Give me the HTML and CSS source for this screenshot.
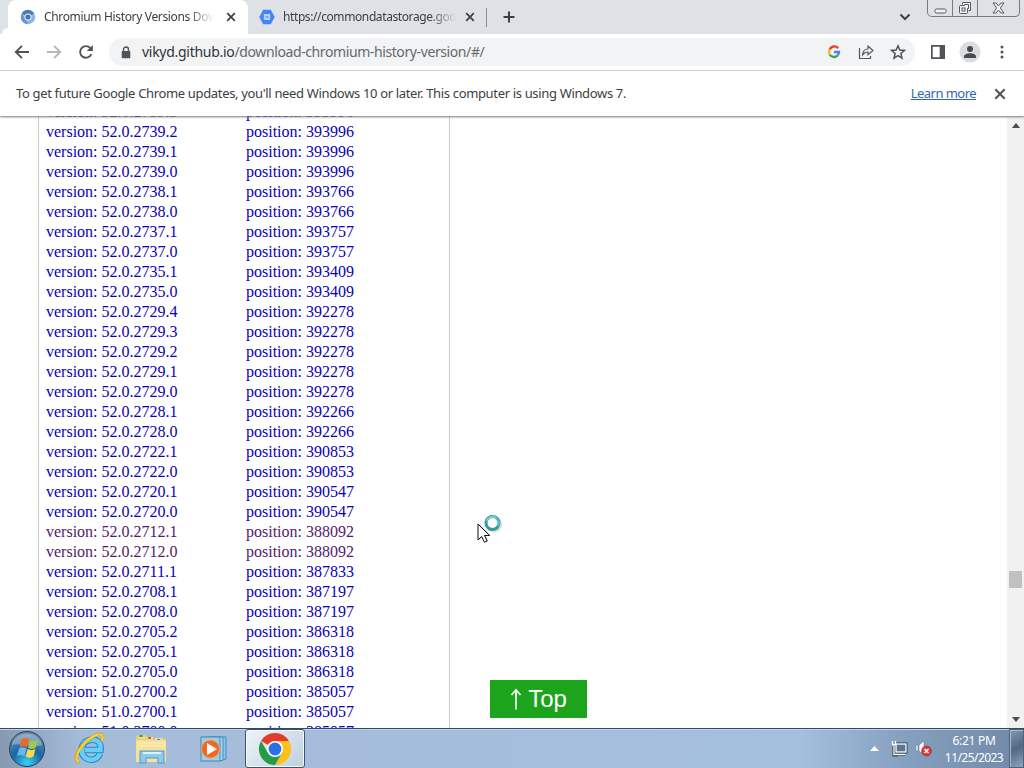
FILE: index.html
```html
<!DOCTYPE html>
<html lang="en">
<head>
<meta charset="utf-8">
<title>Chromium History Versions Download</title>
<link rel="stylesheet" href="styles.css">
</head>
<body>
<div class="desktop">
  <header class="tabstrip">
    <div class="tab active">
      <svg class="favicon" viewBox="0 0 16 16"><circle cx="8" cy="8" r="7.2" fill="#8bb4e4"/><path d="M8 8 1.8 4.4A7.2 7.2 0 0 1 14.2 4.5z" fill="#4a79b5"/><path d="M1.8 4.4 5 10l3 5.2A7.2 7.2 0 0 1 1.8 4.4" fill="#6496d2"/><circle cx="8" cy="8" r="3.6" fill="#e8f1fb"/><circle cx="8" cy="8" r="2.6" fill="#4675b0"/></svg>
      <span class="tab-title t1">Chromium History Versions Down</span>
      <svg class="close" viewBox="0 0 10 10"><path d="M1.2 1.2l7.6 7.6M8.8 1.2L1.2 8.8"/></svg>
    </div>
    <div class="tab">
      <svg class="favicon" viewBox="0 0 16 16"><path d="M4.2 .8h7.6L15.7 8l-3.9 7.2H4.2L.3 8z" fill="#4285f4"/><rect x="4.800" y="5" width="6.400" height="6" rx="1" fill="#b9d2fb"/><path d="M6.300 8h3.400" stroke="#4285f4"/></svg>
      <span class="tab-title t2">https://commondatastorage.goo</span>
      <svg class="close" viewBox="0 0 10 10"><path d="M1.2 1.2l7.6 7.6M8.8 1.2L1.2 8.8"/></svg>
    </div>
    <span class="tab-divider"></span>
    <svg class="plus" viewBox="0 0 12 12"><path d="M6 .5v11M.5 6h11"/></svg>
    <svg class="chevron" viewBox="0 0 12 8"><path d="M1.5 1.5 6 6l4.500-4.500"/></svg>
    <div class="window-controls">
      <span><svg width="13" height="6" viewBox="0 0 13 6"><rect x="1" y="1" width="11" height="4" rx="1.500"/></svg></span>
      <span><svg width="14" height="14" viewBox="0 0 14 14"><path d="M4.500 3.500v-2h8v8h-2"/><rect x="1.500" y="4.500" width="8" height="8" rx="1"/><rect x="4" y="7" width="3" height="3"/><path d="M6.500 4.500v-1h4v4h-1"/></svg></span>
      <span><svg width="13" height="12" viewBox="0 0 13 12"><path d="M1 1h3l2.500 3L9 1h3L8.300 6l3.700 5H9L6.500 8 4 11H1l3.700-5z"/></svg></span>
    </div>
  </header>

  <nav class="toolbar">
    <svg class="nav" viewBox="0 0 16 16"><path d="M15 8H2M8 1.800 1.800 8 8 14.200"/></svg>
    <svg class="nav forward" viewBox="0 0 16 16"><path d="M1 8h13M8 1.800 14.200 8 8 14.200"/></svg>
    <svg class="nav reload" viewBox="0 0 16 16"><path d="M13.300 10.200A5.800 5.800 0 1 1 12.400 4.200"/><path class="solid" d="M14.800 1v6H8.800z"/></svg>
    <div class="omnibox">
      <svg class="lock" viewBox="0 0 10 13"><path d="M2.500 6V3.500a2.500 2.500 0 0 1 5 0V6" fill="none" stroke="#505357" stroke-width="1.400"/><rect x=".7" y="5" width="8.600" height="7.300" rx="1" fill="#505357"/></svg>
      <span class="url"><b>vikyd.github.io</b>/download-chromium-history-version/#/</span>
      <svg class="google" viewBox="0 0 14 14"><g fill="none" stroke-width="2.300"><path d="M11.200 3.300A5 5 0 0 0 2.700 4.500" stroke="#ea4335"/><path d="M2.700 4.500a5 5 0 0 0 0 5" stroke="#fbbc05"/><path d="M2.700 9.500a5 5 0 0 0 7.700 1.200" stroke="#34a853"/><path d="M7 7h5a5 5 0 0 1-1.600 3.700" stroke="#4285f4"/></g></svg>
      <svg class="share" viewBox="0 0 16 16"><path d="M1.500 4v10.500h11V12"/><path d="M4.500 11C4.800 7 7 5 10 5V2l5 4.500-5 4.300V8C7.500 8 6 9 4.500 11z"/></svg>
      <svg class="star" viewBox="0 0 16 16"><path d="m8 1.800 1.800 4.200 4.700.4-3.600 3.100 1.100 4.600L8 11.700l-4 2.400 1.100-4.600-3.600-3.100 4.700-.4z"/></svg>
    </div>
    <svg class="panel" viewBox="0 0 14 14"><path fill="#505357" fill-rule="evenodd" d="M0 0h14v14H0zm1.700 1.700v10.600h7V1.700z"/></svg>
    <svg class="avatar" viewBox="0 0 22 22"><circle cx="11" cy="11" r="10.500" fill="#dadce0"/><circle cx="11" cy="8" r="3" fill="#464a4f"/><path d="M5 17v-1.500C5 13 8.500 12.200 11 12.200s6 .8 6 3.300V17z" fill="#464a4f"/></svg>
    <svg class="menu" viewBox="0 0 4 14"><circle cx="2" cy="2" r="1.500"/><circle cx="2" cy="7" r="1.500"/><circle cx="2" cy="12" r="1.500"/></svg>
  </nav>

  <div class="infobar">
    <span class="notice">To get future Google Chrome updates, you'll need Windows 10 or later. This computer is using Windows 7.</span>
    <a class="learn">Learn more</a>
    <svg class="dismiss" viewBox="0 0 12 12"><path d="M1.300 1.300l9.400 9.400M10.700 1.300 1.300 10.700"/></svg>
  </div>

  <main class="viewport">
    <div class="versions">
      <a class="row"><span>version: 52.0.2739.3</span><span>position: 393996</span></a>
      <a class="row"><span>version: 52.0.2739.2</span><span>position: 393996</span></a>
      <a class="row"><span>version: 52.0.2739.1</span><span>position: 393996</span></a>
      <a class="row"><span>version: 52.0.2739.0</span><span>position: 393996</span></a>
      <a class="row"><span>version: 52.0.2738.1</span><span>position: 393766</span></a>
      <a class="row"><span>version: 52.0.2738.0</span><span>position: 393766</span></a>
      <a class="row"><span>version: 52.0.2737.1</span><span>position: 393757</span></a>
      <a class="row"><span>version: 52.0.2737.0</span><span>position: 393757</span></a>
      <a class="row"><span>version: 52.0.2735.1</span><span>position: 393409</span></a>
      <a class="row"><span>version: 52.0.2735.0</span><span>position: 393409</span></a>
      <a class="row"><span>version: 52.0.2729.4</span><span>position: 392278</span></a>
      <a class="row"><span>version: 52.0.2729.3</span><span>position: 392278</span></a>
      <a class="row"><span>version: 52.0.2729.2</span><span>position: 392278</span></a>
      <a class="row"><span>version: 52.0.2729.1</span><span>position: 392278</span></a>
      <a class="row"><span>version: 52.0.2729.0</span><span>position: 392278</span></a>
      <a class="row"><span>version: 52.0.2728.1</span><span>position: 392266</span></a>
      <a class="row"><span>version: 52.0.2728.0</span><span>position: 392266</span></a>
      <a class="row"><span>version: 52.0.2722.1</span><span>position: 390853</span></a>
      <a class="row"><span>version: 52.0.2722.0</span><span>position: 390853</span></a>
      <a class="row"><span>version: 52.0.2720.1</span><span>position: 390547</span></a>
      <a class="row"><span>version: 52.0.2720.0</span><span>position: 390547</span></a>
      <a class="row visited"><span>version: 52.0.2712.1</span><span>position: 388092</span></a>
      <a class="row visited"><span>version: 52.0.2712.0</span><span>position: 388092</span></a>
      <a class="row"><span>version: 52.0.2711.1</span><span>position: 387833</span></a>
      <a class="row"><span>version: 52.0.2708.1</span><span>position: 387197</span></a>
      <a class="row"><span>version: 52.0.2708.0</span><span>position: 387197</span></a>
      <a class="row"><span>version: 52.0.2705.2</span><span>position: 386318</span></a>
      <a class="row"><span>version: 52.0.2705.1</span><span>position: 386318</span></a>
      <a class="row"><span>version: 52.0.2705.0</span><span>position: 386318</span></a>
      <a class="row"><span>version: 51.0.2700.2</span><span>position: 385057</span></a>
      <a class="row"><span>version: 51.0.2700.1</span><span>position: 385057</span></a>
      <a class="row"><span>version: 51.0.2700.0</span><span>position: 385057</span></a>
    </div>
    <button class="top"><svg width="12" height="22" viewBox="0 0 12 22"><path d="M6 21.500V2M1.500 7 6 1.800 10.500 7" fill="none" stroke="#fff" stroke-width="1.700"/></svg>Top</button>
    <div class="scrollbar">
      <svg width="8" height="5" viewBox="0 0 8 5"><path d="M0 5 4 0l4 5z"/></svg>
      <div class="track"><div class="thumb"></div></div>
      <svg width="8" height="5" viewBox="0 0 8 5"><path d="M0 0h8L4 5z"/></svg>
    </div>
  </main>

  <footer class="taskbar">
    <div class="task"><svg width="38" height="38" viewBox="0 0 38 38">
      <defs><radialGradient id="orb" cx=".5" cy=".9" r=".85"><stop offset="0" stop-color="#35d6f5"/><stop offset=".5" stop-color="#1b66a5"/><stop offset="1" stop-color="#6c8ba8"/></radialGradient></defs>
      <circle cx="19" cy="19" r="17.500" fill="url(#orb)" stroke="#25415f"/><path d="M4 15C7 0 31 0 34 15 25 19 13 12 4 15z" fill="#fff" opacity=".3"/>
      <path d="M13.500 9.500c3-2 5-1.700 7.500 0l-2 8c-2.500-1.500-5-1.700-7.500 0z" fill="#ed6a26"/><path d="M22 10c2.500 1.500 5 1.500 8-.2l-2.300 8c-2.500 1.700-5 1.700-7.500.2z" fill="#9ccc4b"/><path d="M11 18.500c2.800-1.700 5-1.500 7.500 0l-2 7.500c-2.500-1.500-5-1.500-7.500 0z" fill="#66b7ec"/><path d="M19.700 19c2.500 1.500 5 1.500 7.700 0l-2 7.500c-2.800 1.800-5 1.600-7.700 0z" fill="#ffd84a"/></svg></div>
    <div class="task"><svg width="32" height="32" viewBox="0 0 32 32">
      <path d="M26 20.500C23.500 27 17 28 12.500 25.500 5 21 6.500 9 15.500 7 24 5.200 27.500 11 26.500 17H10.500" fill="none" stroke="#2387c9" stroke-width="6.500"/><path d="M26 20.500C23.500 27 17 28 12.500 25.500 5 21 6.500 9 15.500 7 24 5.200 27.500 11 26.500 17H10.500" fill="none" stroke="#69cdf5" stroke-width="4.500"/>
      <path d="M5.500 29.500C-4 27 8 9 20 3c8-3.500 10-1 8 5" fill="none" stroke="#d99d16" stroke-width="3.200"/><path d="M5 29C-3 27 8.500 9 20 3c8-3.500 10-1 8 5" fill="none" stroke="#f9d243" stroke-width="2"/></svg></div>
    <div class="task"><svg width="32" height="30" viewBox="0 0 32 30">
      <path d="M1 2h10l2 3h18v23H1z" fill="#e9cb6c"/><path d="M3 1h7v4H3z" fill="#f4dc8c"/><path d="M4 1h4v2H4z" fill="#55a846"/><path d="M11 3h7v3h-7z" fill="#f4dc8c"/><path d="M13 3h3v2h-3z" fill="#d95c3d"/><path d="M20 4h8v3h-8z" fill="#f4dc8c"/><path d="M22 5h3v1.500h-3z" fill="#438fc4"/><path d="M1 6h30v22H1z" fill="#f6e19a"/><path d="M2 9h28M2 12h28" stroke="#fff2bc"/>
      <path d="M5 17h24v12h-6v-5H11v5H5z" fill="#8ccbed" stroke="#4d9bcd"/><path d="M8 19h18" stroke="#d9f2fc" stroke-width="2"/></svg></div>
    <div class="task"><svg class="player" width="29" height="28" viewBox="0 0 29 28">
      <path d="M10 2h16v22l-4 1H10z" fill="#8bc6e8" stroke="#438fbd"/><path d="M5 2h18v23.500H5z" fill="#a9d6ef" stroke="#438fbd"/><rect x="1" y="2" width="19" height="24" fill="#9ecbe8" stroke="#4789b6"/>
      <circle cx="10.500" cy="14" r="9" fill="#ec6b20" stroke="#f7a067"/><path d="m7 8 10 6-10 6z" fill="#fff"/></svg></div>
    <div class="task current"><svg width="34" height="34" viewBox="0 0 34 34">
      <path d="M17 17 3.100 9A16 16 0 0 1 30.900 9z" fill="#e33b2e"/><path d="M17 9h13.900A16 16 0 0 1 17 33l7-12z" fill="#fbc116"/><path d="M3.100 9A16 16 0 0 0 17 33l7-12-7 3.500L10 21z" fill="#259b48"/><circle cx="17" cy="17" r="8" fill="#fff"/><circle cx="17" cy="17" r="6.400" fill="#2b70e4"/></svg></div>
    <div class="tray">
      <svg class="up" width="9" height="5" viewBox="0 0 9 5"><path d="M0 5 4.500 0 9 5z" fill="#fff"/></svg>
      <svg class="net" width="17" height="17" viewBox="0 0 17 17"><g fill="none" stroke="#283a50" stroke-width="3"><rect x="5" y="4" width="10" height="8"/><path d="M7 14.500h7M3 6v9h4"/></g><g fill="none" stroke="#fff" stroke-width="1.300"><rect x="5" y="4" width="10" height="8" fill="#60758f"/><path d="M7 14.500h7M3 5.500v9h4M1.500 1v3.500h3V1"/></g></svg>
      <svg class="sound" width="18" height="17" viewBox="0 0 18 17"><path d="M1 5h2v6H1zm3 0 5-4v14l-5-4z" fill="#fff" stroke="#566b83" stroke-width=".5"/><circle cx="11.500" cy="11" r="5" fill="#d63b36" stroke="#8f2229" stroke-width=".5"/><path d="m9.500 9 4 4m0-4-4 4" stroke="#fff" stroke-width="1.500"/></svg>
      <div class="clock"><span>6:21 PM</span><span class="date">11/25/2023</span></div>
      <div class="show-desktop"></div>
    </div>
  </footer>

  <svg class="cursor" width="28" height="30" viewBox="0 0 28 30"><path d="m2 12 0 16 3.800-3.500 2.800 6 3-1.300-2.700-5.700H14z" transform="translate(0 -2)" opacity=".2"/><path d="M1 10v16l3.700-3.500 2.700 5.700 2.700-1.200-2.600-5.500h5z" fill="#fff" stroke="#111"/><circle cx="17" cy="10.500" r="8.200" fill="#99a" opacity=".3"/><circle cx="15.500" cy="9" r="6.500" fill="#fff" stroke="#339b9d" stroke-width="3"/><path d="M9.500 7a6.500 6.500 0 0 1 10-3" fill="none" stroke="#87ddd0" stroke-width="1.500"/><path d="M21 12a6.500 6.500 0 0 0-2-8" fill="none" stroke="#62cce4" stroke-width="1.500"/></svg>
</div>
</body>
</html>
```

FILE: styles.css
```css
* { box-sizing: border-box; }
body { margin: 0; font-family: "Noto Sans", sans-serif; color: #3c4043; }
svg { display: block; flex: none; overflow: visible; }
.desktop { position: relative; width: 1024px; height: 768px; display: flex; flex-direction: column; overflow: hidden; background: #fff; }

.tabstrip { height: 34px; flex: none; display: flex; align-items: flex-start; background: #dee1e6; padding-left: 8px; }
.tab { height: 34px; width: 240px; display: flex; align-items: center; padding: 0 12px; border-radius: 8px 8px 0 0; }
.tab.active { background: #fff; box-shadow: -8px 26px 0 -2px #fff; }
.tab + .tab { width: 239px; padding-left: 11px; }
.favicon { width: 16px; height: 16px; }
.tab-title { width: 176px; margin-left: 8px; overflow: hidden; white-space: nowrap; font-size: 12px; line-height: 20px; -webkit-mask-image: linear-gradient(90deg, #000 85%, transparent); mask-image: linear-gradient(90deg, #000 85%, transparent); }
.t1 { letter-spacing: -0.34px; }
.t2 { letter-spacing: -0.4px; }
.close { width: 10px; height: 10px; margin-left: 12px; fill: none; stroke: #3c4043; stroke-width: 1.700; }
.tab + .tab .close { margin-left: 9px; }
.tab-divider { width: 1px; height: 19px; margin: 8px 16px 0 -1px; background: #8b8e92; }
.plus { width: 12px; height: 12px; margin-top: 11px; stroke: #3c4043; stroke-width: 2; }
.chevron { width: 12px; height: 8px; margin: 13px 16px 0 auto; fill: none; stroke: #3c4043; stroke-width: 2; }
.window-controls { display: flex; width: 93px; height: 17px; margin-right: 4px; border: 1px solid #777b82; border-top: 0; border-radius: 0 0 5px 5px; }
.window-controls span { width: 25px; display: flex; align-items: center; justify-content: center; border-right: 1px solid #777b82; }
.window-controls span:first-child { padding-top: 5px; }
.window-controls span:last-child { flex: 1; border: 0; }
.window-controls svg { fill: #f1f2f4; stroke: #555960; }

.toolbar { height: 37px; flex: none; display: flex; align-items: center; padding: 0 20px 0 14px; border-bottom: 1px solid #d5d7da; background: #fff; }
.nav { width: 16px; height: 16px; margin-right: 16px; fill: none; stroke: #505357; stroke-width: 1.900; }
.forward { stroke: #b5b7ba; }
.reload .solid { fill: #505357; stroke: none; }
.omnibox { width: 806px; height: 28px; margin-left: -1px; border-radius: 14px; background: #f1f3f4; display: flex; align-items: center; padding: 0 8px 0 12px; }
.lock { width: 10px; height: 13px; }
.url { margin-left: 11px; font-size: 14px; line-height: 20px; letter-spacing: -0.4px; color: #65696e; white-space: nowrap; }
.url b { font-weight: 400; color: #303438; letter-spacing: -0.28px; }
.google { width: 14px; height: 14px; margin-left: auto; }
.share { width: 16px; height: 16px; margin-left: 17px; fill: none; stroke: #55585d; stroke-width: 1.200; }
.star { width: 16px; height: 16px; margin: 0 1px 0 16px; fill: none; stroke: #505357; stroke-width: 1.500; }
.panel { width: 14px; height: 14px; margin-left: 16px; }
.avatar { width: 22px; height: 22px; margin-left: 14px; }
.menu { width: 4px; height: 14px; margin-left: auto; fill: #505357; }

.infobar { position: relative; height: 45px; flex: none; display: flex; align-items: center; padding: 0 18px 0 16px; background: #fff; box-shadow: 0 1px 2px #777; }
.notice { font-size: 13px; letter-spacing: -0.34px; white-space: nowrap; padding-bottom: 1px; }
.learn { margin-left: auto; padding-bottom: 1px; font-size: 13px; letter-spacing: -0.55px; color: #3367b5; text-decoration: underline; }
.dismiss { width: 12px; height: 12px; margin-left: 18px; fill: none; stroke: #505357; stroke-width: 2; }

.viewport { flex: 1; min-height: 0; display: flex; overflow: hidden; background: #fff; }
.versions { width: 412px; height: 660px; flex: none; margin: -14px 0 0 38px; padding-left: 7px; border: solid #ccc; border-width: 0 1px; font: 16px/20px "Liberation Serif", serif; }
.row { height: 20px; display: flex; color: #0a00b8; }
.row span { width: 200px; }
.visited { color: #551a6b; }
.top { width: 97px; height: 38px; flex: none; align-self: flex-end; margin: 0 0 10px 40px; padding: 0; border: 0; background: #1ca51c; color: #fff; font: 24px/38px "Liberation Sans", sans-serif; display: flex; justify-content: center; align-items: center; gap: 6px; }
.scrollbar { width: 17px; margin-left: auto; display: flex; flex-direction: column; align-items: center; padding: 7px 0 6px; background: #f1f1f1; fill: #4b4b4b; }
.track { flex: 1; width: 13px; padding-top: 443px; }
.thumb { height: 17px; background: #c1c1c1; }

.taskbar { height: 40px; flex: none; display: flex; padding-left: 8px; border-top: 1px solid #31486a; background: linear-gradient(90deg, #8799b2, #a5bcd9 8%, #a5bfdf 78%, #86a0bf 88%, #7089a7); box-shadow: inset 0 1px #c5d5e7; }
.task { width: 61px; display: flex; align-items: center; justify-content: center; }
.task:first-child { width: 38px; margin-right: 13px; }
.player { margin-left: 5px; }
.task.current { width: 60px; margin-left: 3px; border: 1px solid #3d526e; border-radius: 3px; background: linear-gradient(135deg, #eef3f8, #c0cfdf); box-shadow: inset 0 0 0 1px #f5f9fc; }
.tray { margin-left: auto; display: flex; align-items: center; color: #fff; font-size: 12px; letter-spacing: -0.3px; }
.net { margin-left: 12px; }
.sound { margin-left: 7px; }
.clock { width: 62px; margin-left: 10px; display: flex; flex-direction: column; align-items: center; line-height: 17px; white-space: nowrap; }
.date { letter-spacing: -0.55px; }
.show-desktop { width: 15px; height: 39px; margin-left: 4px; border: 1px solid #4d627c; background: linear-gradient(150deg, #8399b2, #536982 50%, #8fa4bc); box-shadow: inset 1px 1px #a9b9cc; }
.cursor { position: absolute; left: 477px; top: 514px; }
```
